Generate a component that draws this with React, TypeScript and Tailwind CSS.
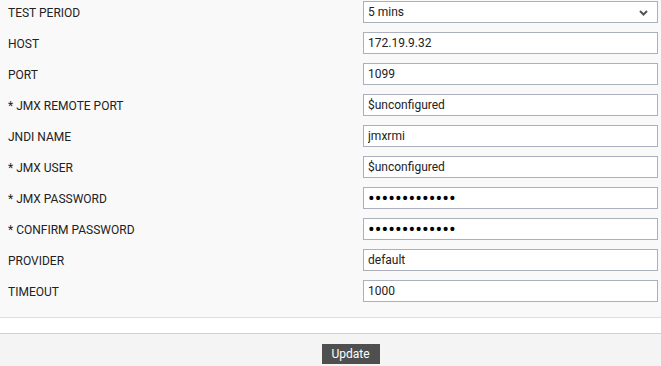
import React from "react";

type Field = {
  label: string;
  value: string;
  password?: boolean;
};

const fields: Field[] = [
  { label: "HOST", value: "172.19.9.32" },
  { label: "PORT", value: "1099" },
  { label: "* JMX REMOTE PORT", value: "$unconfigured" },
  { label: "JNDI NAME", value: "jmxrmi" },
  { label: "* JMX USER", value: "$unconfigured" },
  { label: "* JMX PASSWORD", value: "unconfigured1", password: true },
  { label: "* CONFIRM PASSWORD", value: "unconfigured1", password: true },
  { label: "PROVIDER", value: "default" },
  { label: "TIMEOUT", value: "1000" },
];

const Row: React.FC<{ label: string; children: React.ReactNode }> = ({ label, children }) => (
  <div className="flex h-[31px] items-start pt-[1px]">
    <div className="flex h-[22px] w-[363px] items-center pt-[2px] pl-2 text-[12px] text-[#222]">{label}</div>
    <div className="w-[295px]">{children}</div>
  </div>
);

const App: React.FC = () => {
  return (
    <div className="h-[366px] w-[661px] overflow-hidden bg-white font-['Roboto',sans-serif]">
      <div className="h-[318px] border-b border-[#dedede] bg-[#f9f9f9]">
        <Row label="TEST PERIOD">
          <div className="relative">
            <select
              defaultValue="5"
              className="block h-[22px] w-full appearance-none rounded-none border border-[#aab0bc] bg-white pl-1 text-[12px] text-[#222] outline-none"
            >
              <option value="5">5 mins</option>
              <option value="10">10 mins</option>
            </select>
            <svg
              className="pointer-events-none absolute right-[10px] top-[9px]"
              width="9"
              height="6"
              viewBox="0 0 9 6"
            >
              <path d="M1 1l3.5 3.5L8 1" fill="none" stroke="#555" strokeWidth="2" />
            </svg>
          </div>
        </Row>
        {fields.map((f) => (
          <Row key={f.label} label={f.label}>
            {f.password ? (
              <input
                readOnly
                type="password"
                defaultValue={f.value}
                className="block h-[22px] w-full rounded-none border border-[#aab0bc] bg-white px-1 text-[20px] leading-none text-black outline-none"
              />
            ) : (
              <input
                readOnly
                type="text"
                defaultValue={f.value}
                className="block h-[22px] w-full rounded-none border border-[#aab0bc] bg-white px-1 text-[12px] text-[#222] outline-none"
              />
            )}
          </Row>
        ))}
      </div>
      <div className="h-[16px] border-b border-[#d0d0d0] bg-white" />
      <div className="flex h-[32px] justify-center bg-[#f4f4f4] pt-[10px] pl-[40px]">
        <button className="h-[20px] w-[58px] bg-[#4f4f4f] text-[12px] leading-[20px] text-white">
          Update
        </button>
      </div>
    </div>
  );
};

export default App;
